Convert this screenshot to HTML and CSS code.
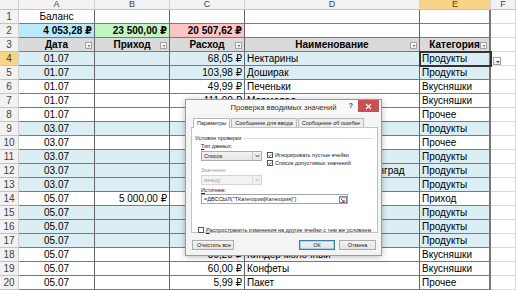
FILE: index.html
```html
<!DOCTYPE html>
<html lang="ru">
<head>
<meta charset="utf-8">
<title>Баланс</title>
<link rel="stylesheet" href="styles.css">
</head>
<body>
<div class="sheet">
  <div class="row hdr">
    <div class="corner"></div>
    <div class="ch">A</div><div class="ch">B</div><div class="ch">C</div><div class="ch">D</div><div class="ch act">E</div><div class="ch f">F</div>
  </div>
  <div class="row">
    <div class="rh">1</div>
    <div class="c ctr">Баланс</div><div class="c"></div><div class="c"></div><div class="c"></div><div class="c e"></div><div class="g"></div>
  </div>
  <div class="row">
    <div class="rh">2</div>
    <div class="c r b cyan">4 053,28 ₽</div><div class="c r b green">23 500,00 ₽</div><div class="c r b pink">20 507,62 ₽</div><div class="c"></div><div class="c e"></div><div class="g"></div>
  </div>
  <div class="row">
    <div class="rh">3</div>
    <div class="c th">Дата<span class="fb"></span></div><div class="c th">Приход<span class="fb"></span></div><div class="c th">Расход<span class="fb"></span></div><div class="c th">Наименование<span class="fb"></span></div><div class="c th e">Категория<span class="fb"></span></div><div class="g"></div>
  </div>
  <div class="row blue">
    <div class="rh act">4</div>
    <div class="c ctr">01.07</div><div class="c"></div><div class="c r">68,05 ₽</div><div class="c">Нектарины</div><div class="c e">Продукты</div><div class="g"></div>
  </div>
  <div class="row blue">
    <div class="rh">5</div>
    <div class="c ctr">01.07</div><div class="c"></div><div class="c r">103,98 ₽</div><div class="c">Доширак</div><div class="c e">Продукты</div><div class="g"></div>
  </div>
  <div class="row">
    <div class="rh">6</div>
    <div class="c ctr">01.07</div><div class="c"></div><div class="c r">49,99 ₽</div><div class="c">Печеньки</div><div class="c e">Вкусняшки</div><div class="g"></div>
  </div>
  <div class="row">
    <div class="rh">7</div>
    <div class="c ctr">01.07</div><div class="c"></div><div class="c r">111,90 ₽</div><div class="c">Мармелад</div><div class="c e">Вкусняшки</div><div class="g"></div>
  </div>
  <div class="row">
    <div class="rh">8</div>
    <div class="c ctr">01.07</div><div class="c"></div><div class="c r">250,00 ₽</div><div class="c">Проезд</div><div class="c e">Прочее</div><div class="g"></div>
  </div>
  <div class="row blue">
    <div class="rh">9</div>
    <div class="c ctr">03.07</div><div class="c"></div><div class="c r">89,90 ₽</div><div class="c">Молоко</div><div class="c e">Продукты</div><div class="g"></div>
  </div>
  <div class="row">
    <div class="rh">10</div>
    <div class="c ctr">03.07</div><div class="c"></div><div class="c r">150,00 ₽</div><div class="c">Проезд</div><div class="c e">Прочее</div><div class="g"></div>
  </div>
  <div class="row blue">
    <div class="rh">11</div>
    <div class="c ctr">03.07</div><div class="c"></div><div class="c r">45,50 ₽</div><div class="c">Хлеб</div><div class="c e">Продукты</div><div class="g"></div>
  </div>
  <div class="row blue">
    <div class="rh">12</div>
    <div class="c ctr">03.07</div><div class="c"></div><div class="c r">320,00 ₽</div><div class="c">Мороженое сливочное Ленинград</div><div class="c e">Продукты</div><div class="g"></div>
  </div>
  <div class="row blue">
    <div class="rh">13</div>
    <div class="c ctr">03.07</div><div class="c"></div><div class="c r">75,30 ₽</div><div class="c">Яйца</div><div class="c e">Продукты</div><div class="g"></div>
  </div>
  <div class="row">
    <div class="rh">14</div>
    <div class="c ctr">05.07</div><div class="c r">5 000,00 ₽</div><div class="c r"></div><div class="c">Зарплата</div><div class="c e">Приход</div><div class="g"></div>
  </div>
  <div class="row blue">
    <div class="rh">15</div>
    <div class="c ctr">05.07</div><div class="c"></div><div class="c r">64,90 ₽</div><div class="c">Сыр</div><div class="c e">Продукты</div><div class="g"></div>
  </div>
  <div class="row blue">
    <div class="rh">16</div>
    <div class="c ctr">05.07</div><div class="c"></div><div class="c r">120,00 ₽</div><div class="c">Фрукты</div><div class="c e">Продукты</div><div class="g"></div>
  </div>
  <div class="row blue">
    <div class="rh">17</div>
    <div class="c ctr">05.07</div><div class="c"></div><div class="c r">99,90 ₽</div><div class="c">Курица</div><div class="c e">Продукты</div><div class="g"></div>
  </div>
  <div class="row">
    <div class="rh">18</div>
    <div class="c ctr">05.07</div><div class="c"></div><div class="c r">39,29 ₽</div><div class="c">Киндер молочный</div><div class="c e">Вкусняшки</div><div class="g"></div>
  </div>
  <div class="row">
    <div class="rh">19</div>
    <div class="c ctr">05.07</div><div class="c"></div><div class="c r">60,00 ₽</div><div class="c">Конфеты</div><div class="c e">Вкусняшки</div><div class="g"></div>
  </div>
  <div class="row">
    <div class="rh">20</div>
    <div class="c ctr">05.07</div><div class="c"></div><div class="c r">5,99 ₽</div><div class="c">Пакет</div><div class="c e">Прочее</div><div class="g"></div>
  </div>
</div>

<div class="sel"></div>
<div class="dd"></div>

<div class="dlg">
  <div class="dlg-title">
    <span>Проверка вводимых значений</span>
    <div class="ctrls"><span class="help">?</span><span class="close"><svg width="7" height="7" viewBox="0 0 7 7"><path d="M1 1L6 6M6 1L1 6" stroke="#fff" stroke-width="1.3"/></svg></span></div>
  </div>
  <div class="dlg-body">
    <div class="tabs">
      <span class="tab on">Параметры</span><span class="tab">Сообщение для ввода</span><span class="tab">Сообщение об ошибке</span>
    </div>
    <div class="panel">
      <div class="grp"><span>Условие проверки</span><i></i></div>
      <div class="inner">
        <div class="lbl"><u>Т</u>ип данных:</div>
        <div class="line">
          <div class="combo"><span>Список</span><b><svg width="5" height="4" viewBox="0 0 5 4"><path d="M0.5 0.8L2.5 3L4.5 0.8" fill="none" stroke="#333" stroke-width="0.9"/></svg></b></div>
          <div class="checks">
            <div class="chk"><span class="box on"><svg width="6" height="6" viewBox="0 0 6 6"><path d="M1 3L2.4 4.6L5 1.2" fill="none" stroke="#222" stroke-width="1"/></svg></span><span>Игнорировать пустые ячейки</span></div>
            <div class="chk"><span class="box on"><svg width="6" height="6" viewBox="0 0 6 6"><path d="M1 3L2.4 4.6L5 1.2" fill="none" stroke="#222" stroke-width="1"/></svg></span><span>Список допустимых значений</span></div>
          </div>
        </div>
        <div class="lbl dis">Значение:</div>
        <div class="combo dis"><span>между</span><b><svg width="5" height="4" viewBox="0 0 5 4"><path d="M0.5 0.8L2.5 3L4.5 0.8" fill="none" stroke="#aaa" stroke-width="0.9"/></svg></b></div>
        <div class="lbl"><u>И</u>сточник:</div>
        <div class="src"><span>=ДВССЫЛ("ТКатегории[Категория]")</span><b><svg width="8" height="7" viewBox="0 0 8 7"><rect x="0.5" y="0.5" width="7" height="6" fill="#fff" stroke="#7a8aa0"/><rect x="1" y="1" width="6" height="1.5" fill="#9bb6d8"/><path d="M2 3L5 6M5 4V6H3" fill="none" stroke="#d2232a" stroke-width="1"/></svg></b></div>
      </div>
      <div class="chk spread"><span class="box"></span><span><u>Р</u>аспространить изменения на другие ячейки с тем же условием</span></div>
    </div>
    <div class="btns">
      <span class="btn">Очистить все</span>
      <span class="sp"></span>
      <span class="btn ok">ОК</span>
      <span class="btn">Отмена</span>
    </div>
  </div>
</div>
</body>
</html>
```
FILE: styles.css
```css
* { box-sizing: border-box; }
html, body { margin: 0; padding: 0; }
body {
  width: 516px;
  height: 290px;
  overflow: hidden;
  position: relative;
  background: #fff;
  font-family: "Liberation Sans", Arial, "DejaVu Sans", sans-serif;
  font-size: 10px;
  color: #000;
}
.sheet { display: flex; flex-direction: column; }
.row {
  display: grid;
  grid-template-columns: 19px 76px 75px 75px 175px 71px 25px;
  height: 14px;
}
.row.hdr { height: 10px; }
.corner, .ch, .rh {
  background: #f2f2f2;
  color: #444;
  border-right: 1px solid #d0d0d0;
  border-bottom: 1px solid #c4c4c4;
}
.ch {
  font-size: 9px;
  line-height: 8px;
  text-align: center;
}
.ch.act, .rh.act { background: #f8d48b; color: #5a3d00; }
.rh {
  text-align: center;
  line-height: 13px;
  font-size: 10px;
}
.c, .g {
  border-right: 1px solid #666;
  border-bottom: 1px solid #7a7a7a;
  line-height: 13px;
  white-space: nowrap;
  overflow: hidden;
  padding: 0 2px;
  position: relative;
}
.c.e { border-right: 2px solid #777; }
.g { border-right: 1px solid #dadada; border-bottom: 1px solid #dadada; }
.blue .c { background: #daeef3; }
.ctr { text-align: center; }
.r { text-align: right; }
.b { font-weight: bold; }
.cyan { background: #b8eafb; }
.green { background: #c2f5bf; }
.pink { background: #ffc4c4; }
.th {
  background: #dadada;
  font-weight: bold;
  text-align: center;
}
.fb {
  position: absolute;
  right: 2px;
  bottom: 2px;
  width: 7px;
  height: 7px;
  border: 1px solid #a3a3a3;
  background: linear-gradient(#ffffff, #e9e9e9);
}
.fb::after {
  content: "";
  position: absolute;
  left: 1.5px;
  top: 2px;
  border-left: 1.5px solid transparent;
  border-right: 1.5px solid transparent;
  border-top: 2px solid #444;
}
.sel {
  position: absolute;
  left: 419px;
  top: 51px;
  width: 73px;
  height: 16px;
  border: 2px solid #333;
}
.dd {
  position: absolute;
  left: 493px;
  top: 57px;
  width: 8px;
  height: 8px;
  border: 1px solid #a3a3a3;
  background: linear-gradient(#ffffff, #ececec);
}
.dd::after {
  content: "";
  position: absolute;
  left: 1.5px;
  top: 2.5px;
  border-left: 2px solid transparent;
  border-right: 2px solid transparent;
  border-top: 2px solid #444;
}

/* dialog */
.dlg {
  position: absolute;
  left: 185px;
  top: 99px;
  width: 197px;
  height: 157px;
  border: 1px solid #9c9c9c;
  background: #f4f4f4;
  box-shadow: 0 1px 6px rgba(0,0,0,0.28);
  display: flex;
  flex-direction: column;
  color: #222;
}
.dlg-title {
  height: 14px;
  position: relative;
  display: flex;
  align-items: center;
  justify-content: center;
  font-size: 7.6px;
  line-height: 9px;
  color: #333;
  background: #f8f8f8;
}
.ctrls {
  position: absolute;
  right: 2px;
  top: 0;
  display: flex;
  align-items: flex-start;
  gap: 5px;
}
.help { font-size: 7px; font-weight: bold; color: #444; line-height: 11px; }
.close {
  width: 21px;
  height: 12px;
  background: #c75050;
  display: flex;
  align-items: center;
  justify-content: center;
}
.dlg-body {
  flex: 1;
  display: flex;
  flex-direction: column;
  padding: 3px 3px 0 5px;
  font-size: 5.5px;
  line-height: 6px;
}
.tabs { display: flex; align-items: flex-end; padding-left: 2px; height: 10px; }
.tab {
  height: 9px;
  line-height: 8px;
  padding: 0 3px;
  border: 1px solid #b9b9b9;
  border-bottom: none;
  background: #eeeeee;
  margin-right: 1px;
  white-space: nowrap;
}
.tab.on { height: 10px; background: #fff; margin-bottom: -1px; position: relative; z-index: 1; }
.panel {
  height: 106px;
  background: #fff;
  border: 1px solid #c3c3c3;
  display: flex;
  flex-direction: column;
  padding: 7px 3px 0 3px;
}
.grp { display: flex; align-items: center; gap: 2px; height: 6px; line-height: 6px; }
.grp i { flex: 1; border-top: 1px solid #dcdcdc; }
.inner { padding-left: 6px; display: flex; flex-direction: column; }
.lbl { height: 7px; line-height: 7px; margin-top: 2px; white-space: nowrap; }
.lbl.dis { color: #a0a0a0; margin-top: 1px; }
.line { display: flex; align-items: flex-start; gap: 5px; }
.combo {
  width: 61px;
  height: 10px;
  border: 1px solid #acacac;
  background: linear-gradient(#f2f2f2, #e6e6e6);
  display: flex;
  align-items: center;
  margin-top: 1px;
}
.combo span { flex: 1; padding-left: 2px; line-height: 8px; }
.combo b {
  width: 9px;
  height: 8px;
  border-left: 1px solid #c8c8c8;
  display: flex;
  align-items: center;
  justify-content: center;
}
.combo.dis { background: #f2f2f2; border-color: #d4d4d4; color: #a8a8a8; }
.combo.dis b { border-left-color: #e0e0e0; }
.checks { display: flex; flex-direction: column; gap: 2px; padding-top: 2px; }
.chk { display: flex; align-items: center; gap: 2px; white-space: nowrap; height: 6px; line-height: 6px; }
.box {
  width: 6px;
  height: 6px;
  border: 1px solid #555;
  background: #fff;
  display: flex;
  align-items: center;
  justify-content: center;
  flex: none;
}
.box svg { width: 5px; height: 5px; }
.src {
  width: 147px;
  height: 10px;
  border: 1px solid #a5a5a5;
  background: #fff;
  display: flex;
  align-items: center;
  margin-top: 0;
}
.src span { flex: 1; padding-left: 2px; line-height: 8px; white-space: nowrap; }
.src b { width: 9px; height: 8px; display: flex; align-items: center; justify-content: center; }
.spread { margin-top: 23px; padding-left: 3px; }
.btns { display: flex; align-items: center; gap: 4px; margin-top: 7px; padding-left: 1px; padding-right: 2px; }
.sp { flex: 1; }
.btn {
  height: 10px;
  line-height: 8px;
  border: 1px solid #acacac;
  background: linear-gradient(#f2f2f2, #e4e4e4);
  text-align: center;
  padding: 0 4px;
  white-space: nowrap;
}
.btns .btn:first-child { width: 42px; }
.btn.ok { width: 36px; border-color: #3c7fb1; box-shadow: inset 0 0 0 0.5px #70b8e6; }
.btns .btn:last-child { width: 37px; }
```
